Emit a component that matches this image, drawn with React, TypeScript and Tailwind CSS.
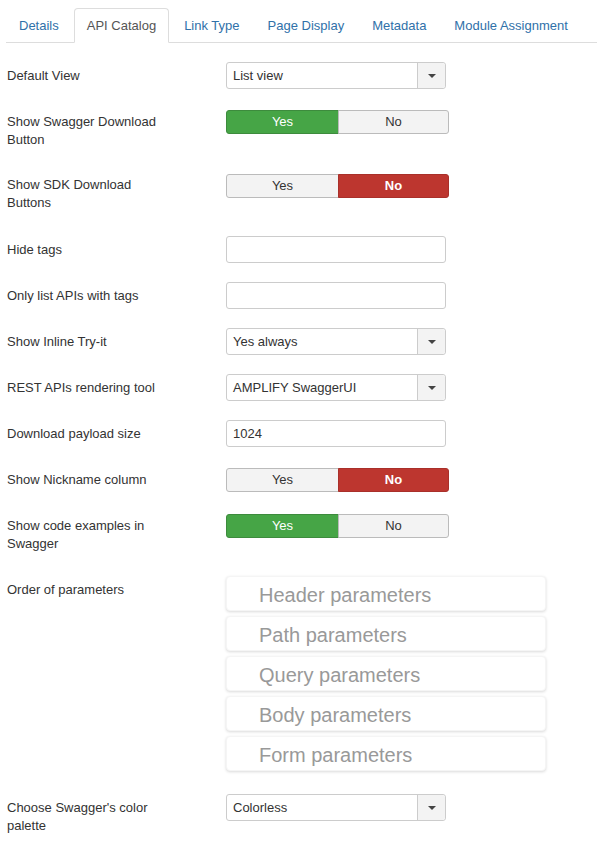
import React from 'react';

const tabs = ['Details', 'API Catalog', 'Link Type', 'Page Display', 'Metadata', 'Module Assignment'];
const params = ['Header parameters', 'Path parameters', 'Query parameters', 'Body parameters', 'Form parameters'];

function Row({ label, height, pt = 'pt-[5px]', children }: { label: string, height: string, pt?: string, children: React.ReactNode }) {
    return (
        <div className={`flex items-start ${height}`}>
            <div className={`w-[219px] shrink-0 ${pt}`}>
                <label className="block max-w-[160px] leading-[18px]">{label}</label>
            </div>
            {children}
        </div>
    )
}

function Select({ value }: { value: string }) {
    return (
        <div className="flex h-[27px] w-[220px] rounded-[3px] border border-[#ccc] bg-white">
            <div className="flex-1 truncate pl-[6px] leading-[25px] text-[#333]">{value}</div>
            <div className="flex w-[28px] items-center justify-center rounded-r-[3px] border-l border-[#ccc] bg-[#f3f3f3]">
                <svg width="8" height="4" viewBox="0 0 8 4"><path d="M0 0 L8 0 L4 4 Z" fill="#444" /></svg>
            </div>
        </div>
    )
}

function TextInput({ value = '' }: { value?: string }) {
    return (
        <div className="h-[27px] w-[220px] rounded-[3px] border border-[#ccc] bg-white pl-[6px] leading-[25px] text-[#333]">{value}</div>
    )
}

function Toggle({ value }: { value: 'yes' | 'no' }) {
    const off = 'bg-[#f3f3f3] border-[#bbb] text-[#333]';
    return (
        <div className="flex h-[24px] w-[223px]">
            <div className={`h-[24px] w-[113px] rounded-l-[3px] border text-center leading-[22px] ${value === 'yes' ? 'border-[#3d8b3d] bg-[#46a546] text-white' : off}`}>Yes</div>
            <div className={`-ml-px h-[24px] w-[111px] rounded-r-[3px] border text-center leading-[22px] ${value === 'no' ? 'border-[#a9302a] bg-[#bd362f] font-bold text-white' : off}`}>No</div>
        </div>
    )
}

export default function App() {
    return (
        <div className="min-h-[848px] w-[597px] bg-white pl-[6px] pt-[8px] font-['Liberation_Sans',Arial,sans-serif] text-[13px] text-[#333]">
            <ul className="flex border-b border-[#ddd]">
                {tabs.map((tab) => {
                    const active = tab === 'API Catalog';
                    return (
                        <li key={tab} className="-mb-px mr-[2px]">
                            <a className={`block rounded-t-[4px] border px-3 pb-[7px] pt-[8px] leading-[18px] ${active ? 'border-[#ddd] border-b-white bg-white text-[#555]' : 'border-transparent text-[#3071a9]'}`}>{tab}</a>
                        </li>
                    )
                })}
            </ul>
            <div className="mt-[19px] pl-[1px]">
                <Row label="Default View" height="h-[48px]"><Select value="List view" /></Row>
                <Row label="Show Swagger Download Button" height="h-[64px]" pt="pt-[3px]"><Toggle value="yes" /></Row>
                <Row label="Show SDK Download Buttons" height="h-[62px]" pt="pt-[2px]"><Toggle value="no" /></Row>
                <Row label="Hide tags" height="h-[46px]"><TextInput /></Row>
                <Row label="Only list APIs with tags" height="h-[46px]"><TextInput /></Row>
                <Row label="Show Inline Try-it" height="h-[46px]"><Select value="Yes always" /></Row>
                <Row label="REST APIs rendering tool" height="h-[46px]"><Select value="AMPLIFY SwaggerUI" /></Row>
                <Row label="Download payload size" height="h-[48px]"><TextInput value="1024" /></Row>
                <Row label="Show Nickname column" height="h-[46px]" pt="pt-[3px]"><Toggle value="no" /></Row>
                <Row label="Show code examples in Swagger" height="h-[62px]" pt="pt-[3px]"><Toggle value="yes" /></Row>
                <Row label="Order of parameters" height="h-[218px]">
                    <ul className="flex flex-col gap-[5px]">
                        {params.map((p) => (
                            <li key={p} className="h-[35px] w-[320px] rounded-[4px] border border-[#f5f5f5] bg-white pl-[32px] pt-[4px] text-[20px] leading-[29px] text-[#999] shadow-[0_1px_3px_rgba(0,0,0,0.15)]">{p}</li>
                        ))}
                    </ul>
                </Row>
                <Row label="Choose Swagger's color palette" height="h-[48px]"><Select value="Colorless" /></Row>
            </div>
        </div>
    )
}
